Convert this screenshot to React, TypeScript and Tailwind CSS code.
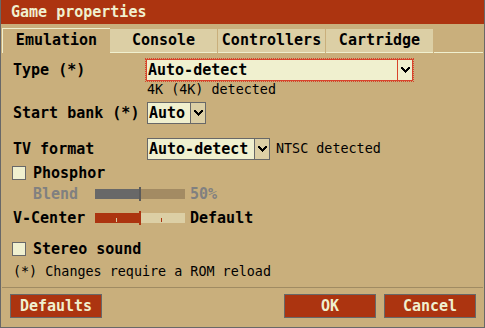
import React from 'react';

// pixel chevron, like the bitmap glyph in the dropdown arrow cell
const Chevron = () => (
  <svg width="9" height="6" viewBox="0 0 9 6" className="block" shapeRendering="crispEdges">
    <rect x="0" y="0" width="2" height="1" />
    <rect x="7" y="0" width="2" height="1" />
    <rect x="0" y="1" width="3" height="1" />
    <rect x="6" y="1" width="3" height="1" />
    <rect x="1" y="2" width="3" height="1" />
    <rect x="5" y="2" width="3" height="1" />
    <rect x="2" y="3" width="5" height="1" />
    <rect x="3" y="4" width="3" height="1" />
    <rect x="4" y="5" width="1" height="1" />
  </svg>
);

interface SelectProps {
  value: string;
  width: string;
  focused?: boolean;
}

const Select: React.FC<SelectProps> = ({ value, width, focused }) => (
  <div
    className={
      focused
        ? `${width} h-[22px] flex border border-[#d8432b] outline outline-1 outline-dotted outline-[#d8432b] bg-[#f0f0cf]`
        : `${width} h-[22px] flex border border-[#686868] bg-[#f0f0cf]`
    }
  >
    <div className="flex-1 pl-[1px] font-bold text-[15px] leading-[20px]">{value}</div>
    <div
      className={
        focused
          ? 'w-[15px] flex items-center justify-center border-l border-[#d8432b] bg-[#f0f0cf]'
          : 'w-[15px] flex items-center justify-center border-l border-[#686868] bg-[#dccfa5]'
      }
    >
      <Chevron />
    </div>
  </div>
);

const Checkbox: React.FC<{ label: string }> = ({ label }) => (
  <div className="h-[14px] flex items-center pl-[11px]">
    <div className="w-[14px] h-[14px] border border-[#686868] bg-[#f0f0cf]" />
    <span className="ml-[7px] font-bold text-[15px] leading-[14px]">{label}</span>
  </div>
);

const Button: React.FC<{ label: string }> = ({ label }) => (
  <div className="w-[92px] h-6 border border-[#686868] bg-[#ac3410] text-[#f0f0cf] font-bold text-[15px] leading-[22px] text-center">
    {label}
  </div>
);

const tabs = ['Console', 'Controllers', 'Cartridge'];

export default function App() {
  return (
    <div className="w-[485px] h-[328px] bg-[#c9af7c] border-x border-b border-[#686868] flex flex-col text-black font-['DejaVu_Sans_Mono',monospace] overflow-hidden">
      <div className="h-6 shrink-0 bg-[#ac3410] text-[#f0f0cf] font-bold text-[15px] leading-6 pl-[10px]">
        Game properties
      </div>

      <div className="mt-1 h-[25px] flex items-end pl-px">
        <div className="w-[108px] h-[25px] border-t border-l border-[#f0f0cf] font-bold text-[15px] leading-[23px] text-center">
          Emulation
        </div>
        {tabs.map(tab => (
          <div
            key={tab}
            className="w-[107px] h-6 mr-px bg-[#dccfa5] border-b border-[#f0f0cf] font-bold text-[15px] leading-[23px] text-center"
          >
            {tab}
          </div>
        ))}
        <div className="flex-1 h-6 mr-px border-b border-[#f0f0cf]" />
      </div>

      <div className="mt-[6px] h-[22px] flex items-center pl-3">
        <div className="w-[133px] font-bold text-[15px] leading-[20px]">Type (*)</div>
        <Select value="Auto-detect" width="w-[267px]" focused />
      </div>
      <div className="mt-px h-4 pl-[146px] text-[13.4px] leading-4">4K (4K) detected</div>

      <div className="mt-1 h-[22px] flex items-center pl-3">
        <div className="w-[134px] font-bold text-[15px] leading-[20px]">Start bank (*)</div>
        <Select value="Auto" width="w-[59px]" />
      </div>

      <div className="mt-[14px] h-[22px] flex items-center pl-3">
        <div className="w-[134px] font-bold text-[15px] leading-[20px]">TV format</div>
        <Select value="Auto-detect" width="w-[123px]" />
        <span className="ml-[6px] text-[13.4px] leading-4">NTSC detected</span>
      </div>

      <div className="mt-[6px]">
        <Checkbox label="Phosphor" />
      </div>

      <div className="mt-[7px] h-[14px] flex items-center pl-[32px] text-[#808080] font-bold text-[15px]">
        <div className="w-[62px] leading-[14px]">Blend</div>
        <div className="w-[90px] h-[14px] flex items-center">
          <div className="w-[44px] h-[10px] bg-[#686868]" />
          <div className="w-[2px] h-[14px] bg-[#5a5a5a]" />
          <div className="flex-1 h-[10px] bg-[#a38b63]" />
        </div>
        <span className="ml-[5px] leading-[14px]">50%</span>
      </div>

      <div className="mt-[10px] h-[14px] flex items-center pl-3 font-bold text-[15px]">
        <div className="w-[82px] leading-[14px]">V-Center</div>
        <div className="w-[90px] h-[14px] flex items-center">
          <div className="relative w-[44px] h-[10px] bg-[#ac3410]">
            <div className="absolute left-[21px] bottom-px w-px h-[4px] bg-[#dccfa5]" />
          </div>
          <div className="w-[2px] h-[14px] bg-[#ac3410]" />
          <div className="relative flex-1 h-[10px] bg-[#dccfa5]">
            <div className="absolute left-[20px] bottom-px w-px h-[4px] bg-[#ac3410]" />
          </div>
        </div>
        <span className="ml-[5px] leading-[14px]">Default</span>
      </div>

      <div className="mt-[17px]">
        <Checkbox label="Stereo sound" />
      </div>

      <div className="mt-[8px] h-4 pl-3 text-[13.4px] leading-4">(*) Changes require a ROM reload</div>

      <div className="mt-[7px] h-px mx-px bg-[#a08b62]" />

      <div className="mt-[6px] flex pl-[9px] pr-[8px]">
        <Button label="Defaults" />
        <div className="flex-1" />
        <Button label="OK" />
        <div className="ml-2">
          <Button label="Cancel" />
        </div>
      </div>
    </div>
  );
}
